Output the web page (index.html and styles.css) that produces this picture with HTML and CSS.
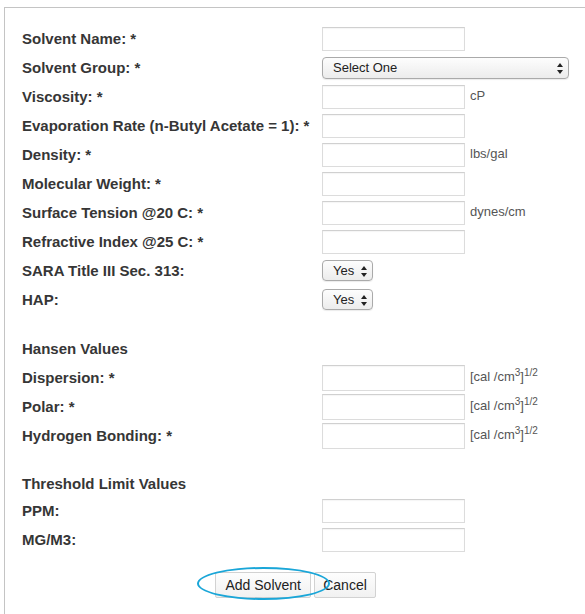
FILE: index.html
```html
<!DOCTYPE html>
<html lang="en">
<head>
<meta charset="utf-8">
<title>Add Solvent</title>
<link rel="stylesheet" href="styles.css">
</head>
<body>
<form class="panel">
  <div class="row">
    <label class="lbl">Solvent Name: *</label>
    <div class="field"><input class="txt" type="text"></div>
  </div>
  <div class="row">
    <label class="lbl">Solvent Group: *</label>
    <div class="field">
      <span class="sel sel-wide">
        <select><option>Select One</option></select>
        <svg class="arrows" width="6" height="11" viewBox="0 0 6 11"><path d="M3 0L6 4H0Z M3 11L0 7H6Z" fill="#222"/></svg>
      </span>
    </div>
  </div>
  <div class="row">
    <label class="lbl">Viscosity: *</label>
    <div class="field"><input class="txt" type="text"><span class="unit">cP</span></div>
  </div>
  <div class="row">
    <label class="lbl">Evaporation Rate (n-Butyl Acetate = 1): *</label>
    <div class="field"><input class="txt" type="text"></div>
  </div>
  <div class="row">
    <label class="lbl">Density: *</label>
    <div class="field"><input class="txt" type="text"><span class="unit">lbs/gal</span></div>
  </div>
  <div class="row">
    <label class="lbl">Molecular Weight: *</label>
    <div class="field"><input class="txt" type="text"></div>
  </div>
  <div class="row">
    <label class="lbl">Surface Tension @20 C: *</label>
    <div class="field"><input class="txt" type="text"><span class="unit">dynes/cm</span></div>
  </div>
  <div class="row">
    <label class="lbl">Refractive Index @25 C: *</label>
    <div class="field"><input class="txt" type="text"></div>
  </div>
  <div class="row">
    <label class="lbl">SARA Title III Sec. 313:</label>
    <div class="field">
      <span class="sel sel-small">
        <select><option>Yes</option><option>No</option></select>
        <svg class="arrows" width="6" height="11" viewBox="0 0 6 11"><path d="M3 0L6 4H0Z M3 11L0 7H6Z" fill="#222"/></svg>
      </span>
    </div>
  </div>
  <div class="row">
    <label class="lbl">HAP:</label>
    <div class="field">
      <span class="sel sel-small">
        <select><option>Yes</option><option>No</option></select>
        <svg class="arrows" width="6" height="11" viewBox="0 0 6 11"><path d="M3 0L6 4H0Z M3 11L0 7H6Z" fill="#222"/></svg>
      </span>
    </div>
  </div>

  <div class="group hansen">
    <div class="row"><h3 class="lbl">Hansen Values</h3></div>
    <div class="row">
      <label class="lbl">Dispersion: *</label>
      <div class="field"><input class="txt" type="text"><span class="unit">[cal /cm<sup>3</sup>]<sup>1/2</sup></span></div>
    </div>
    <div class="row">
      <label class="lbl">Polar: *</label>
      <div class="field"><input class="txt" type="text"><span class="unit">[cal /cm<sup>3</sup>]<sup>1/2</sup></span></div>
    </div>
    <div class="row">
      <label class="lbl">Hydrogen Bonding: *</label>
      <div class="field"><input class="txt" type="text"><span class="unit">[cal /cm<sup>3</sup>]<sup>1/2</sup></span></div>
    </div>
  </div>

  <div class="group">
    <div class="row row-head"><h3 class="lbl">Threshold Limit Values</h3></div>
    <div class="row">
      <label class="lbl">PPM:</label>
      <div class="field"><input class="txt" type="text"></div>
    </div>
    <div class="row">
      <label class="lbl">MG/M3:</label>
      <div class="field"><input class="txt" type="text"></div>
    </div>
  </div>

  <div class="actions">
    <span class="primary-wrap">
      <button type="button" class="btn">Add Solvent</button>
      <span class="ring"></span>
    </span>
    <button type="button" class="btn">Cancel</button>
  </div>
</form>
</body>
</html>
```

FILE: styles.css
```css
html, body {
  margin: 0;
  padding: 0;
  background: #fff;
  overflow: hidden;
}

body {
  font-family: "Liberation Sans", Arial, Helvetica, sans-serif;
  color: #333;
}

/* panel: the right edge runs past the window, so only top and left borders show */
.panel {
  margin: 7px 0 0 4px;
  width: 582px;
  min-height: 620px;
  border-top: 1px solid #c4c4c4;
  border-left: 1px solid #c4c4c4;
  padding: 16px 0 0 17px;
  box-sizing: border-box;
}

.row {
  display: grid;
  grid-template-columns: 300px auto;
  align-items: center;
  height: 29px;
}

.row-head {
  height: 26px;
}

.group {
  margin-top: 20px;
}

.lbl {
  margin: 0;
  font-size: 15px;
  font-weight: bold;
  color: #363636;
  white-space: nowrap;
}

.field {
  display: flex;
  align-items: center;
  gap: 5px;
}

.txt {
  width: 143px;
  height: 24px;
  box-sizing: border-box;
  border: 1px solid #dcdcdc;
  border-top-color: #d0d0d0;
  box-shadow: inset 0 1px 1px rgba(0, 0, 0, 0.04);
  background: #fff;
  margin: 0;
  padding: 0 4px;
  font: 13px "Liberation Sans", Arial, sans-serif;
}

.hansen .txt {
  height: 26px;
}

.unit {
  font-size: 13px;
  color: #555;
  line-height: 1;
  position: relative;
  top: -1px;
}

.unit sup {
  font-size: 10px;
  line-height: 0;
  vertical-align: 5px;
}

.sel {
  position: relative;
  display: inline-block;
}

.sel select {
  -webkit-appearance: none;
  appearance: none;
  box-sizing: border-box;
  margin: 0;
  border: 1px solid #aaa;
  border-radius: 4px;
  background: linear-gradient(#fdfdfd, #ececec);
  box-shadow: 0 1px 1px rgba(0, 0, 0, 0.08);
  font: 13px "Liberation Sans", Arial, sans-serif;
  color: #222;
  outline: none;
}

.sel-wide select {
  width: 247px;
  height: 22px;
  padding: 0 0 0 10px;
}

.sel-small select {
  width: 51px;
  height: 21px;
  padding: 0 0 0 10px;
}

.arrows {
  position: absolute;
  right: 6px;
  top: 50%;
  margin-top: -5px;
  pointer-events: none;
}

.actions {
  display: flex;
  justify-content: center;
  gap: 3px;
  margin-top: 18px;
  margin-left: -17px;
}

.primary-wrap {
  position: relative;
  display: inline-block;
}

.btn {
  height: 26px;
  margin: 0;
  padding: 0 8px;
  border: 1px solid #d2d2d2;
  border-radius: 2px;
  background: linear-gradient(#fdfdfd, #f1f1f1);
  font: 14px "Liberation Sans", Arial, sans-serif;
  color: #222;
}

.primary-wrap .btn {
  width: 96px;
}

.ring {
  position: absolute;
  left: -18px;
  top: -5px;
  width: 133px;
  height: 33px;
  box-sizing: border-box;
  border: 2px solid #1aa6d8;
  border-radius: 50%;
  pointer-events: none;
}
```
